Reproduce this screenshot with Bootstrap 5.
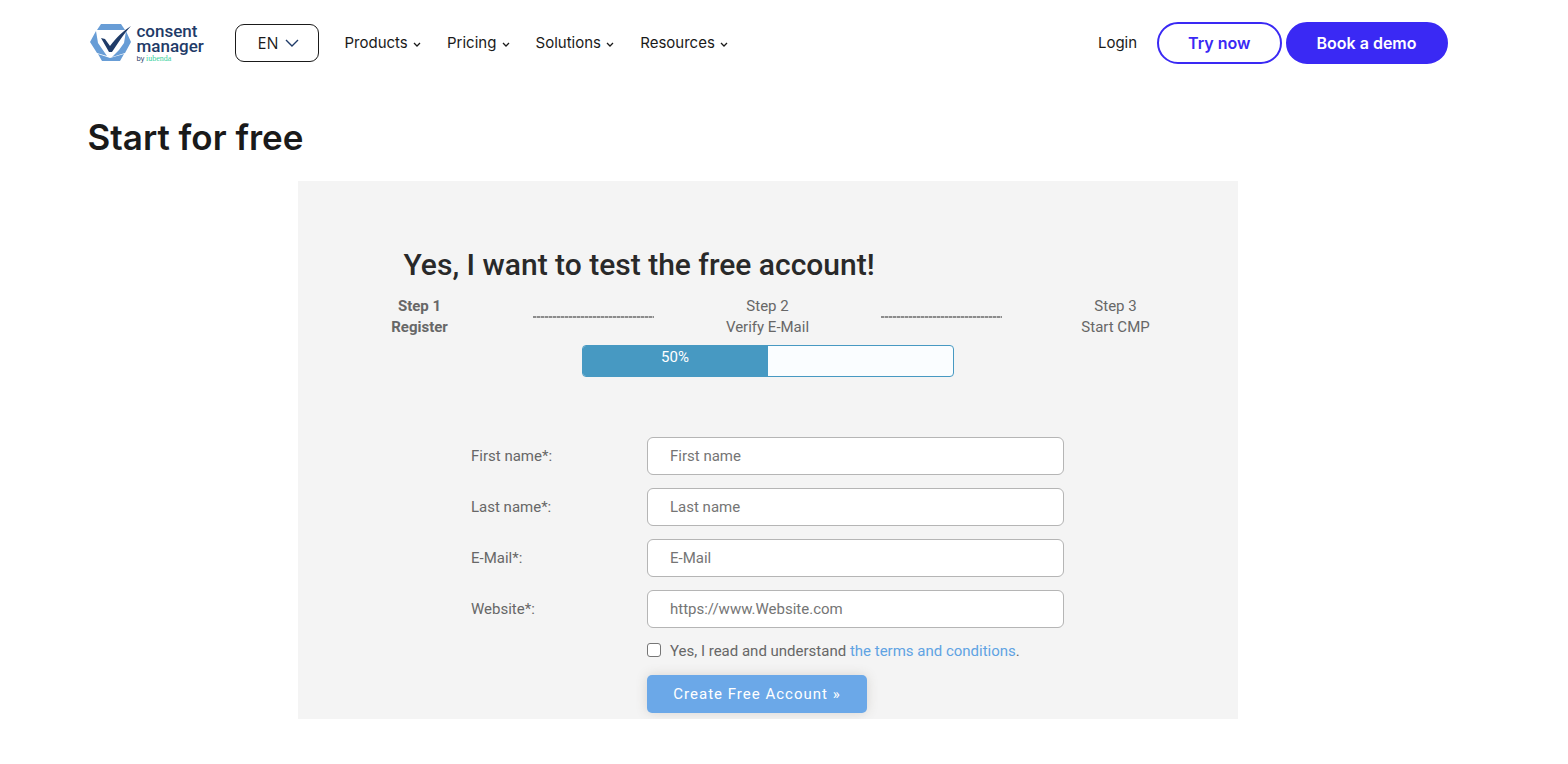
<!DOCTYPE html>
<html lang="en">
<head>
<meta charset="utf-8">
<meta name="viewport" content="width=device-width, initial-scale=1">
<title>consentmanager – Start for free</title>
<link href="https://cdn.jsdelivr.net/npm/bootstrap@5.3.0/dist/css/bootstrap.min.css" rel="stylesheet">
<style>
  body { font-family: Inter, "Liberation Sans", sans-serif; font-size: 15px; color: #1a1a1a; background: #fff; padding-right: 33px; }
  .page-width { max-width: 1360px; margin: 0 auto; }
  .site-header { height: 86px; }
  .site-header a { color: #1a1a1a; text-decoration: none; white-space: nowrap; }
  .logo { width: 118px; margin-left: 2px; margin-right: 27px; }
  .logo-words { font-family: "Open Sans", sans-serif; font-size: 17px; line-height: 15px; font-weight: 500; color: #1f3b68; margin-left: 4px; }
  .logo-words .name { font-family: Roboto, sans-serif; }
  .logo-words .byline { font-family: "Noto Sans", sans-serif; font-size: 7px; line-height: 9px; font-weight: 400; }
  .byline em { color: #38cf9c; font-style: normal; font-family: "Liberation Serif", serif; font-size: 8px; }
  .lang { width: 84px; height: 38px; border: 1px solid #1a1a1a; border-radius: 9px; padding: 0 0 0 22px; font-family: "Open Sans", sans-serif; font-size: 16px; color: #1a1a1a;
    background-image: url("data:image/svg+xml,%3Csvg xmlns='http://www.w3.org/2000/svg' viewBox='0 0 14 8'%3E%3Cpath d='M1 1l6 6 6-6' fill='none' stroke='%231f3b68' stroke-width='1.4'/%3E%3C/svg%3E");
    background-size: 14px 8px; background-position: 49px 14px; }
  .main-links { gap: 26px; margin-left: 26px; padding-top: 1px; }
  .main-links svg { margin-left: 1px; }
  .pill { height: 42px; border-radius: 21px; border: 2px solid #3a29f4; font-size: 16px; font-weight: 600; padding: 0 29px; white-space: nowrap; }
  .pill-outline, .pill-outline:hover { color: #3a29f4; background: #fff; }
  .pill-solid, .pill-solid:hover { color: #fff; background: #3a29f4; }
  .page-title { font-size: 35px; line-height: 44px; font-weight: 600; margin: 29px 0 22px; }
  .signup { max-width: 940px; background: #f4f4f4; color: #676767; font-family: Roboto, sans-serif; padding: 63px 35px 6px; }
  .signup h2 { font-size: 30px; line-height: 42px; font-weight: 500; color: #292929; margin: 0 0 10px; padding-left: 71px; }
  .steps { line-height: 21px; text-align: center; margin-bottom: 7px; }
  .steps li { width: 20%; }
  .steps .joiner { width: 70%; height: 2px; background: repeating-linear-gradient(90deg, #8c8c8c 0 3px, #c4c4c4 3px 4px); }
  .bar { width: 372px; height: 32px; border: 1px solid #4799c2; border-radius: 4px; background: #fafdff; font-size: 15px; margin-bottom: 60px; }
  .bar .progress-bar { background: #4799c2; padding-bottom: 7px; }
  .fields { max-width: 593px; }
  .fields label.tag { width: 176px; flex: none; }
  .fields .form-control { height: 38px; border: 1px solid #b5b5b5; border-radius: 6px; padding: 0 22px; font-size: 15px; }
  .fields .form-control::placeholder { color: #757575; opacity: 1; }
  .field-row { margin-bottom: 13px; }
  .after-label { padding-left: 176px; }
  .terms { height: 21px; gap: 9px; margin-bottom: 13px; line-height: 21px; }
  .terms .form-check-input { width: 14px; height: 14px; margin: 2px 0 0; border: 1px solid #767676; border-radius: 3px; flex: none; }
  .terms a { color: #60a3e3; text-decoration: none; }
  .create, .create:hover { width: 220px; height: 38px; padding: 0; border: 0; border-radius: 5px; background: #6ba8e8; color: #fff; font-size: 15px; letter-spacing: 1px; box-shadow: 0 0 12px rgba(90, 80, 60, .18); }
</style>
</head>
<body>
<div class="page-width">
  <header class="site-header d-flex align-items-center">
    <a href="#" class="logo d-flex align-items-center">
      <svg width="43" height="40" viewBox="0 0 43 40" class="flex-shrink-0" aria-hidden="true">
        <path fill="#689dd6" d="M11 1h20l4 6H7z"/>
        <path fill="#689dd6" d="M6 8l2 12 9 13-10-3-7-11z"/>
        <path fill="#689dd6" d="M36 8l-2 12-5 7-7 7 13-4 6-11z"/>
        <path fill="#689dd6" d="M8 31l12 4 14-4-4 7H12z"/>
        <path fill="#1f3b68" d="M11 15l4 1 5 7C27 14 33 8 41 3 33 12 28 20 22 29h-3z"/>
      </svg>
      <span class="logo-words d-flex flex-column"><span class="name">consent<br>manager</span><span class="byline">by <em>iubenda</em></span></span>
    </a>
    <select class="form-select lang flex-shrink-0" aria-label="Language"><option>EN</option></select>
    <nav class="main-links d-flex" aria-label="Main">
      <a href="#">Products <svg width="8" height="5" viewBox="0 0 8 5"><path d="M1 1l3 3 3-3" fill="none" stroke="#1a1a1a" stroke-width="1.3"/></svg></a>
      <a href="#">Pricing <svg width="8" height="5" viewBox="0 0 8 5"><path d="M1 1l3 3 3-3" fill="none" stroke="#1a1a1a" stroke-width="1.3"/></svg></a>
      <a href="#">Solutions <svg width="8" height="5" viewBox="0 0 8 5"><path d="M1 1l3 3 3-3" fill="none" stroke="#1a1a1a" stroke-width="1.3"/></svg></a>
      <a href="#">Resources <svg width="8" height="5" viewBox="0 0 8 5"><path d="M1 1l3 3 3-3" fill="none" stroke="#1a1a1a" stroke-width="1.3"/></svg></a>
    </nav>
    <div class="d-flex align-items-center ms-auto">
      <a href="#" class="me-3 pe-1">Login</a>
      <button type="button" class="btn pill pill-outline me-1">Try now</button>
      <button type="button" class="btn pill pill-solid">Book a demo</button>
    </div>
  </header>

  <main>
    <h1 class="page-title">Start for free</h1>
    <section class="signup mx-auto">
      <h2>Yes, I want to test the free account!</h2>
      <ol class="steps list-unstyled d-flex align-items-center">
        <li class="fw-bold">Step 1<br>Register</li>
        <li><div class="joiner mx-auto"></div></li>
        <li>Step 2<br>Verify E-Mail</li>
        <li><div class="joiner mx-auto"></div></li>
        <li>Step 3<br>Start CMP</li>
      </ol>
      <div class="progress bar mx-auto" role="progressbar" aria-label="Registration progress" aria-valuenow="50" aria-valuemin="0" aria-valuemax="100">
        <div class="progress-bar" style="width: 50%">50%</div>
      </div>
      <form class="fields mx-auto">
        <div class="field-row d-flex align-items-center"><label class="tag" for="first">First name*:</label><input class="form-control" id="first" type="text" placeholder="First name"></div>
        <div class="field-row d-flex align-items-center"><label class="tag" for="last">Last name*:</label><input class="form-control" id="last" type="text" placeholder="Last name"></div>
        <div class="field-row d-flex align-items-center"><label class="tag" for="mail">E-Mail*:</label><input class="form-control" id="mail" type="email" placeholder="E-Mail"></div>
        <div class="field-row d-flex align-items-center"><label class="tag" for="site">Website*:</label><input class="form-control" id="site" type="url" placeholder="https://www.Website.com"></div>
        <div class="after-label">
          <div class="terms d-flex"><input class="form-check-input" id="terms" type="checkbox"><label for="terms">Yes, I read and understand <a href="#">the terms and conditions</a>.</label></div>
          <button type="submit" class="btn create">Create Free Account »</button>
        </div>
      </form>
    </section>
  </main>
</div>
<script src="https://cdn.jsdelivr.net/npm/bootstrap@5.3.0/dist/js/bootstrap.bundle.min.js"></script>
</body>
</html>
